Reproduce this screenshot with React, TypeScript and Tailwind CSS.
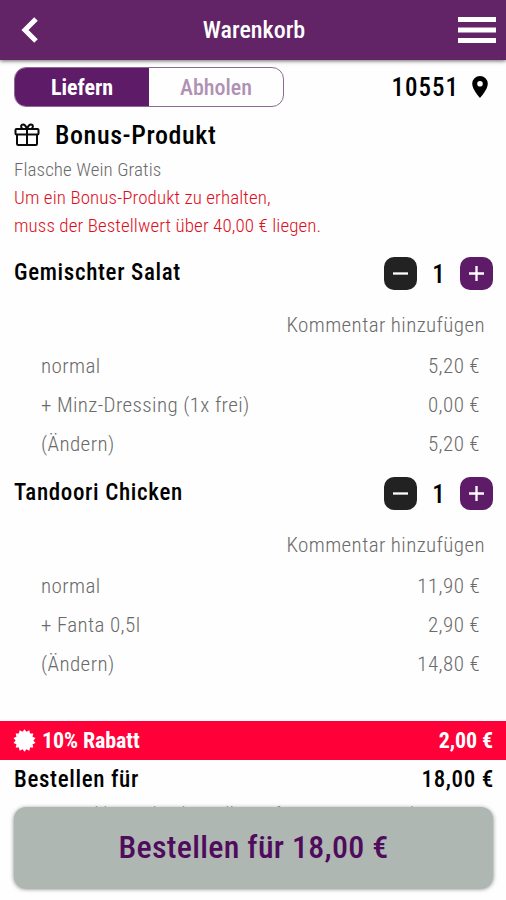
interface CartLine {
  label: string;
  price: string;
}

interface CartItem {
  name: string;
  quantity: number;
  lines: CartLine[];
}

const items: CartItem[] = [
  {
    name: 'Gemischter Salat',
    quantity: 1,
    lines: [
      { label: 'normal', price: '5,20 €' },
      { label: '+ Minz-Dressing (1x frei)', price: '0,00 €' },
      { label: '(Ändern)', price: '5,20 €' },
    ],
  },
  {
    name: 'Tandoori Chicken',
    quantity: 1,
    lines: [
      { label: 'normal', price: '11,90 €' },
      { label: '+ Fanta 0,5l', price: '2,90 €' },
      { label: '(Ändern)', price: '14,80 €' },
    ],
  },
];

function GiftIcon() {
  return (
    <svg width="26" height="24" viewBox="0 0 26 24" fill="none" stroke="#0a0a0a" strokeWidth="2" strokeLinejoin="round">
      <rect x="1.5" y="6" width="23" height="5.5" rx="1" />
      <path d="M3 11.5v9.300c0 .7.4 1.200 1.200 1.200h17.600c.8 0 1.200-.5 1.200-1.200V11.500M13 6v16" />
      <path d="M13 5.800C12 3.200 10.600 1.500 9.200 1.500 8 1.500 7.100 2.400 7.100 3.500c0 1.100.6 1.900 1.500 2.300M13 5.800c1-2.600 2.400-4.300 3.800-4.300 1.200 0 2.100.9 2.100 2 0 1.100-.6 1.900-1.500 2.300" />
    </svg>
  );
}

function PinIcon() {
  return (
    <svg width="16" height="22" viewBox="0 0 16 22" fill="#000">
      <path fillRule="evenodd" d="M8 0a7.800 7.800 0 0 0-7.800 7.800C.2 13.500 8 22 8 22s7.800-8.500 7.800-14.200A7.800 7.800 0 0 0 8 0Zm0 5a2.800 2.800 0 1 1 0 5.600A2.800 2.800 0 0 1 8 5Z" />
    </svg>
  );
}

function BadgeIcon() {
  // 14-point starburst
  const points = Array.from({ length: 28 }, (_, i) => {
    const r = i % 2 === 0 ? 11.3 : 8.9;
    const a = (Math.PI * i) / 14 - Math.PI / 2;
    return `${11.5 + r * Math.cos(a)},${11.5 + r * Math.sin(a)}`;
  }).join(' ');
  return (
    <svg width="23" height="23" viewBox="0 0 23 23" fill="#fff">
      <polygon points={points} />
    </svg>
  );
}

function Stepper({ quantity }: { quantity: number }) {
  return (
    <div className="flex items-center">
      <button className="flex size-[33px] items-center justify-center rounded-[10px] bg-[#222]" aria-label="Weniger">
        <svg width="17" height="17" viewBox="0 0 17 17" stroke="#fff" strokeWidth="2.300">
          <path d="M1 8.500h15" />
        </svg>
      </button>
      <span className="w-[43px] pt-0.5 text-center text-[25px] leading-8 font-medium">{quantity}</span>
      <button className="flex size-[33px] items-center justify-center rounded-[10px] bg-[#5e1b68]" aria-label="Mehr">
        <svg width="17" height="17" viewBox="0 0 17 17" stroke="#fff" strokeWidth="2.300">
          <path d="M1 8.500h15M8.500 1v15" />
        </svg>
      </button>
    </div>
  );
}

function Item({ item }: { item: CartItem }) {
  return (
    <section className="h-[220px]">
      <div className="flex h-[33px] items-center justify-between">
        <h3 className="pb-px text-[23px] font-medium tracking-[0.65px]">{item.name}</h3>
        <Stepper quantity={item.quantity} />
      </div>
      <div className="mt-[21px] mb-2 pr-2 text-right text-[21px] leading-7 font-light tracking-[0.4px] text-[#6a6a6a]">
        Kommentar hinzufügen
      </div>
      {item.lines.map(line => (
        <div
          key={line.label}
          className="flex h-[39px] items-center justify-between pr-[13px] pl-[27px] text-[21px] font-light tracking-[0.4px] text-[#6a6a6a]"
        >
          <span>{line.label}</span>
          <span>{line.price}</span>
        </div>
      ))}
    </section>
  );
}

export default function App() {
  return (
    <div className="flex h-[900px] w-[506px] flex-col overflow-hidden bg-[#fefefe] font-['Roboto_Condensed','Roboto',sans-serif] text-black">
      <header className="flex h-[60px] shrink-0 items-center justify-between bg-[#622466] pr-[10px] pl-[21px] text-white shadow-[0_1px_4px_rgba(0,0,0,0.6)]">
        <svg width="29" height="26" viewBox="0 0 29 26" fill="none" stroke="#fff" strokeWidth="5">
          <path d="M15 2 4 13l11 11" />
        </svg>
        <h1 className="text-2xl font-medium">Warenkorb</h1>
        <svg width="38" height="26" viewBox="0 0 38 26" fill="#fff">
          <path d="M0 0h38v5H0zM0 10.500h38v5H0zM0 21h38v5H0z" />
        </svg>
      </header>

      <main className="flex-1 pt-[7px] pr-[13px] pl-[14px]">
        <div className="flex h-10 items-center justify-between">
          <div className="flex h-10 w-[270px] overflow-hidden rounded-[12px] border border-[#8a6c90] text-[22px]">
            <button className="w-[134px] bg-[#5e1b68] font-bold text-white">Liefern</button>
            <button className="flex-1 font-medium text-[#b091b5]">Abholen</button>
          </div>
          <div className="flex items-center gap-[13px] pr-[5px] text-[25px] font-medium tracking-[1px]">
            <span className="pt-px">10551</span>
            <PinIcon />
          </div>
        </div>

        <div className="mt-[7px] flex h-[42px] items-center gap-[15px]">
          <GiftIcon />
          <h2 className="text-[26px] font-medium tracking-[0.6px]">Bonus-Produkt</h2>
        </div>
        <div className="text-[19px] leading-7 font-light tracking-[0.09px]">
          <p className="text-[#6a6a6a]">Flasche Wein Gratis</p>
          <p className="text-[#dc0f1c]">Um ein Bonus-Produkt zu erhalten,</p>
          <p className="text-[#dc0f1c]">muss der Bestellwert über 40,00 € liegen.</p>
        </div>

        <div className="mt-[17px]">
          {items.map(item => (
            <Item key={item.name} item={item} />
          ))}
        </div>
      </main>

      <footer className="h-[179px] shrink-0">
        <div className="flex h-[39px] items-center justify-between bg-[#ff0038] px-[13px] text-[22px] font-bold text-white">
          <span className="flex items-center gap-[6px] tracking-[-0.1px]">
            <BadgeIcon />
            10% Rabatt
          </span>
          <span className="tracking-[-0.1px]">2,00 €</span>
        </div>
        <div className="flex h-[38px] items-center justify-between pr-3 pl-[14px] text-[23px] font-medium tracking-[0.65px]">
          <span className="pt-0.5">Bestellen für</span>
          <span className="pt-0.5">18,00 €</span>
        </div>
        <p className="mt-[2px] -mb-[21px] text-center text-[19px] leading-7 font-light tracking-[0.6px] text-[#999]">
          inkl. Mindestbestellwert für 10,00 € erreicht
        </p>
        <button className="relative mx-[14px] flex h-[81px] w-[479px] items-center justify-center rounded-[12px] bg-[#afb7b3] pb-0.5 text-[32px] font-medium tracking-[0.3px] text-[#4f0b5c] shadow-[0_1px_4px_rgba(0,0,0,0.5)]">
          Bestellen für 18,00 €
        </button>
      </footer>
    </div>
  );
}
